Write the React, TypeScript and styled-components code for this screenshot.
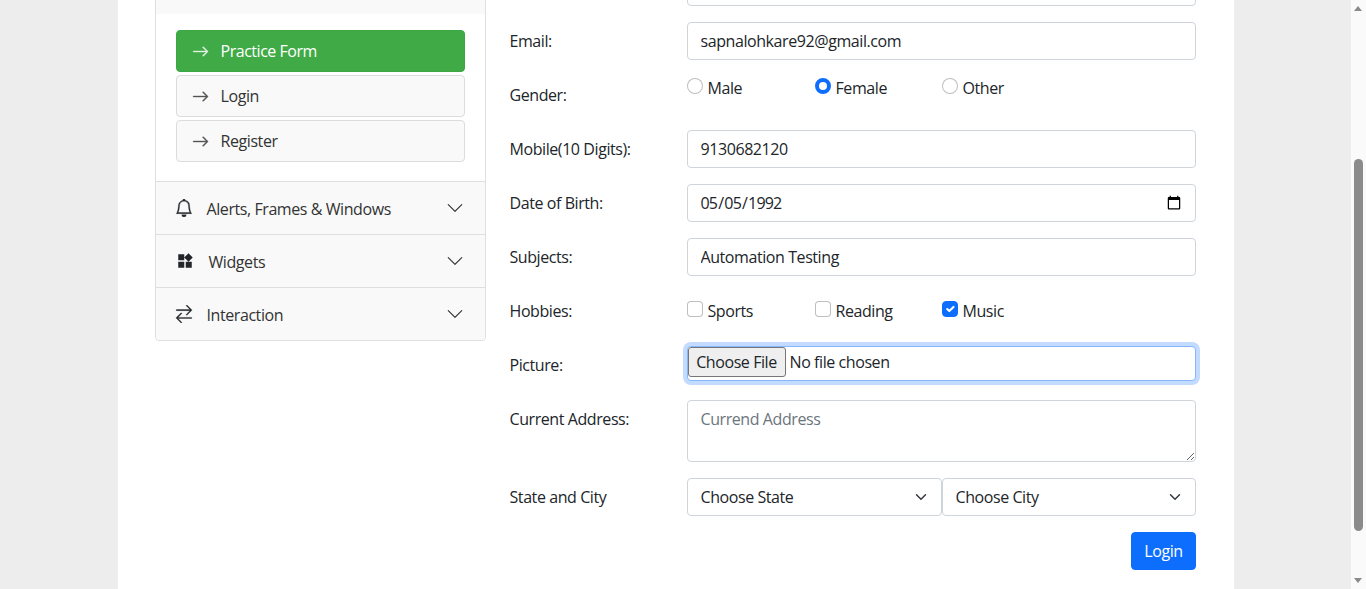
import React from 'react';
import styled, { createGlobalStyle } from 'styled-components';
import { BsArrowRight, BsBell, BsArrowLeftRight, BsChevronDown } from 'react-icons/bs';
import { MdWidgets } from 'react-icons/md';

const FONT = `"Open Sans", "Noto Sans", sans-serif`;
const TRACKING = '-0.42px';

const GlobalStyle = createGlobalStyle`
  html, body {
    margin: 0;
    padding: 0;
    height: 100%;
    overflow: hidden;
    background: #ededed;
    font-family: ${FONT};
    font-size: 16px;
    color: #212529;
  }
  * { box-sizing: border-box; }
`;

const Viewport = styled.div`
  display: flex;
  height: 589px;
  overflow: hidden;
`;

const Page = styled.div`
  flex: 1;
  display: flex;
  justify-content: center;
  background: #ededed;
`;

const Main = styled.main`
  width: 1116px;
  height: 700px;
  margin-top: -38px;
  padding: 0 38px 0 37px;
  background: #fff;
  display: flex;
  gap: 24px;
  align-items: flex-start;
`;

const Sidebar = styled.aside`
  width: 331px;
  flex: none;
  background: #fff;
  border: 1px solid #dfdfdf;
  border-radius: 4px;
`;

const OpenHeader = styled.div`
  height: 51px;
  background: #f9f9f9;
`;

const MenuBody = styled.div`
  display: flex;
  flex-direction: column;
  gap: 3px;
  padding: 16px 20px 19px;
`;

const MenuButton = styled.a<{ $active?: boolean }>`
  height: 42px;
  display: flex;
  align-items: center;
  gap: 12px;
  padding-left: 15px;
  border-radius: 4px;
  border: 1px solid ${p => (p.$active ? '#3aa742' : '#dcdcdc')};
  background: ${p => (p.$active ? '#40aa46' : '#f9f9f9')};
  color: ${p => (p.$active ? '#fff' : '#333')};
  letter-spacing: ${p => (p.$active ? '-0.47px' : TRACKING)};

  svg {
    color: ${p => (p.$active ? '#fff' : '#555')};
    opacity: ${p => (p.$active ? 0.85 : 1)};
    stroke: currentColor;
    stroke-width: 0.35;
  }
`;

const SectionRow = styled.div`
  height: 53px;
  display: flex;
  align-items: center;
  padding: 2px 20px 0;
  background: #f9f9f9;
  border-top: 1px solid #dfdfdf;
  color: #333;
  letter-spacing: ${TRACKING};

  &:last-child {
    border-radius: 0 0 4px 4px;
  }
`;

const SectionIcon = styled.span<{ $width: number; $flip?: boolean; $bold?: boolean }>`
  width: ${p => p.$width}px;
  flex: none;
  display: flex;
  align-items: center;
  color: #212529;
  margin-top: -3px;

  svg {
    ${p => (p.$flip ? 'transform: scaleX(-1);' : '')}
    ${p => (p.$bold ? 'margin-left: -1px; stroke: currentColor; stroke-width: 0.3;' : '')}
  }
`;

const SectionChevron = styled(BsChevronDown)`
  margin-left: auto;
  margin-top: -3px;
  margin-right: 1px;
  color: #333;
`;

const Form = styled.form`
  flex: 1;
  min-width: 0;
  display: flex;
  flex-direction: column;
  gap: 16px;
  padding-top: 6px;
`;

const Row = styled.div`
  display: grid;
  grid-template-columns: 177px minmax(0, 1fr);
  min-height: 38px;
`;

const Label = styled.label`
  padding-top: 7px;
  line-height: 24px;
  letter-spacing: ${TRACKING};
`;

const TextInput = styled.input`
  display: block;
  width: 100%;
  height: 38px;
  padding: 6px 12px 6px 13px;
  font: inherit;
  letter-spacing: ${TRACKING};
  color: #212529;
  background: #fff;
  border: 1px solid #ced4da;
  border-radius: 4px;
  outline: none;
`;

const DateInput = styled(TextInput)`
  padding-left: 12px;
  letter-spacing: -0.8px;

  &::-webkit-calendar-picker-indicator {
    margin-right: -1px;
  }
`;

const FileInput = styled.input`
  display: block;
  width: 100%;
  height: 35px;
  padding: 0;
  font: inherit;
  letter-spacing: ${TRACKING};
  background: #fff;
  border: 1px solid #86b7fe;
  border-radius: 4px;
  box-shadow: 0 0 0 4px rgba(13, 110, 253, 0.25);
  outline: none;
  color: #212529;

  &::file-selector-button {
    font: inherit;
    letter-spacing: ${TRACKING};
    height: 30px;
    width: 98px;
    padding: 0;
    margin: 0 4px 0 0;
    border: 1px solid #767676;
    border-radius: 3px;
    background: #efefef;
    color: #212529;
  }
`;

const TextArea = styled.textarea`
  display: block;
  width: 100%;
  height: 62px;
  padding: 6px 12px 6px 13px;
  font: inherit;
  line-height: 24px;
  letter-spacing: ${TRACKING};
  border: 1px solid #ced4da;
  border-radius: 4px;
  outline: none;

  &::placeholder {
    color: #6c757d;
    opacity: 1;
  }
`;

const OptionGrid = styled.div<{ $top: number }>`
  display: grid;
  grid-template-columns: 128px 127px 1fr;
  padding-top: ${p => p.$top}px;
`;

const Option = styled.label`
  height: 24px;
  display: flex;
  align-items: flex-start;
  gap: 5px;
  line-height: 24px;
  letter-spacing: ${TRACKING};
`;

const RadioMark = styled.input`
  appearance: none;
  width: 16px;
  height: 16px;
  flex: none;
  margin: 2px 0 0;
  border: 1px solid rgba(0, 0, 0, 0.25);
  border-radius: 50%;
  background: #fff;

  &:checked {
    border: 4px solid #0d6efd;
  }
`;

const CheckMark = styled.input`
  appearance: none;
  width: 16px;
  height: 16px;
  flex: none;
  margin: 2px 0 0;
  border: 1px solid rgba(0, 0, 0, 0.25);
  border-radius: 4px;
  background: #fff center / 100% no-repeat;

  &:checked {
    border-color: #0d6efd;
    background-color: #0d6efd;
    background-image: url("data:image/svg+xml,%3csvg xmlns='http://www.w3.org/2000/svg' viewBox='0 0 20 20'%3e%3cpath fill='none' stroke='%23fff' stroke-linecap='round' stroke-linejoin='round' stroke-width='3' d='m6 10 3 3 6-6'/%3e%3c/svg%3e");
  }
`;

const SelectPair = styled.div`
  display: grid;
  grid-template-columns: 255px 1fr;
`;

const Select = styled.select`
  appearance: none;
  display: block;
  width: 100%;
  height: 38px;
  padding: 6px 36px 6px 13px;
  font: inherit;
  letter-spacing: ${TRACKING};
  color: #212529;
  border: 1px solid #ced4da;
  border-radius: 4px;
  outline: none;
  background: #fff url("data:image/svg+xml,%3csvg xmlns='http://www.w3.org/2000/svg' viewBox='0 0 16 16'%3e%3cpath fill='none' stroke='%23343a40' stroke-linecap='round' stroke-linejoin='round' stroke-width='2' d='m2 5 6 6 6-6'/%3e%3c/svg%3e") no-repeat right 12px center / 16px 12px;
`;

const Actions = styled.div`
  display: flex;
  justify-content: flex-end;
`;

const SubmitButton = styled.button`
  width: 65px;
  height: 38px;
  padding: 0 0 0 1px;
  font: inherit;
  letter-spacing: ${TRACKING};
  color: #fff;
  background: #0d6efd;
  border: 1px solid #0d6efd;
  border-radius: 4px;
`;

const Scrollbar = styled.div`
  width: 15px;
  flex: none;
  position: relative;
  background: #fafafa;
`;

const ScrollArrow = styled.div<{ $down?: boolean }>`
  position: absolute;
  left: 3px;
  ${p => (p.$down ? 'bottom: 6px;' : 'top: 6px;')}
  width: 0;
  height: 0;
  border-left: 4.5px solid transparent;
  border-right: 4.5px solid transparent;
  ${p => (p.$down ? 'border-top' : 'border-bottom')}: 5px solid #8a8a8a;
`;

const ScrollThumb = styled.div`
  position: absolute;
  left: 3px;
  top: 159px;
  width: 9px;
  height: 372px;
  border-radius: 5px;
  background: #8b8b8b;
`;

const genders = ['Male', 'Female', 'Other'];
const hobbies = ['Sports', 'Reading', 'Music'];
const noop = () => {};

export default function App() {
  return (
    <>
      <GlobalStyle />
      <Viewport>
        <Page>
          <Main>
            <Sidebar>
              <OpenHeader />
              <MenuBody>
                <MenuButton $active>
                  <BsArrowRight size={17} /> Practice Form
                </MenuButton>
                <MenuButton>
                  <BsArrowRight size={17} /> Login
                </MenuButton>
                <MenuButton>
                  <BsArrowRight size={17} /> Register
                </MenuButton>
              </MenuBody>
              <SectionRow>
                <SectionIcon $width={31} $bold>
                  <BsBell size={18} />
                </SectionIcon>
                Alerts, Frames &amp; Windows
                <SectionChevron size={18} />
              </SectionRow>
              <SectionRow>
                <SectionIcon $width={33}>
                  <MdWidgets size={18} />
                </SectionIcon>
                Widgets
                <SectionChevron size={18} />
              </SectionRow>
              <SectionRow>
                <SectionIcon $width={31} $bold $flip>
                  <BsArrowLeftRight size={18} />
                </SectionIcon>
                Interaction
                <SectionChevron size={18} />
              </SectionRow>
            </Sidebar>

            <Form>
              <Row>
                <span />
                <TextInput type="text" readOnly />
              </Row>
              <Row>
                <Label>Email:</Label>
                <TextInput type="email" readOnly value="sapnalohkare92@gmail.com" />
              </Row>
              <Row>
                <Label>Gender:</Label>
                <OptionGrid $top={0}>
                  {genders.map(g => (
                    <Option key={g}>
                      <RadioMark type="radio" name="gender" onChange={noop} checked={g === 'Female'} />
                      {g}
                    </Option>
                  ))}
                </OptionGrid>
              </Row>
              <Row>
                <Label>Mobile(10 Digits):</Label>
                <TextInput type="text" readOnly value="9130682120" />
              </Row>
              <Row>
                <Label>Date of Birth:</Label>
                <DateInput type="date" onChange={noop} value="1992-05-05" />
              </Row>
              <Row>
                <Label>Subjects:</Label>
                <TextInput type="text" readOnly value="Automation Testing" />
              </Row>
              <Row>
                <Label>Hobbies:</Label>
                <OptionGrid $top={7}>
                  {hobbies.map(h => (
                    <Option key={h}>
                      <CheckMark type="checkbox" onChange={noop} checked={h === 'Music'} />
                      {h}
                    </Option>
                  ))}
                </OptionGrid>
              </Row>
              <Row>
                <Label>Picture:</Label>
                <FileInput type="file" />
              </Row>
              <Row>
                <Label>Current Address:</Label>
                <TextArea placeholder="Currend Address" />
              </Row>
              <Row>
                <Label>State and City</Label>
                <SelectPair>
                  <Select defaultValue="state">
                    <option value="state">Choose State</option>
                  </Select>
                  <Select defaultValue="city">
                    <option value="city">Choose City</option>
                  </Select>
                </SelectPair>
              </Row>
              <Actions>
                <SubmitButton type="button">Login</SubmitButton>
              </Actions>
            </Form>
          </Main>
        </Page>
        <Scrollbar>
          <ScrollArrow />
          <ScrollThumb />
          <ScrollArrow $down />
        </Scrollbar>
      </Viewport>
    </>
  );
}
